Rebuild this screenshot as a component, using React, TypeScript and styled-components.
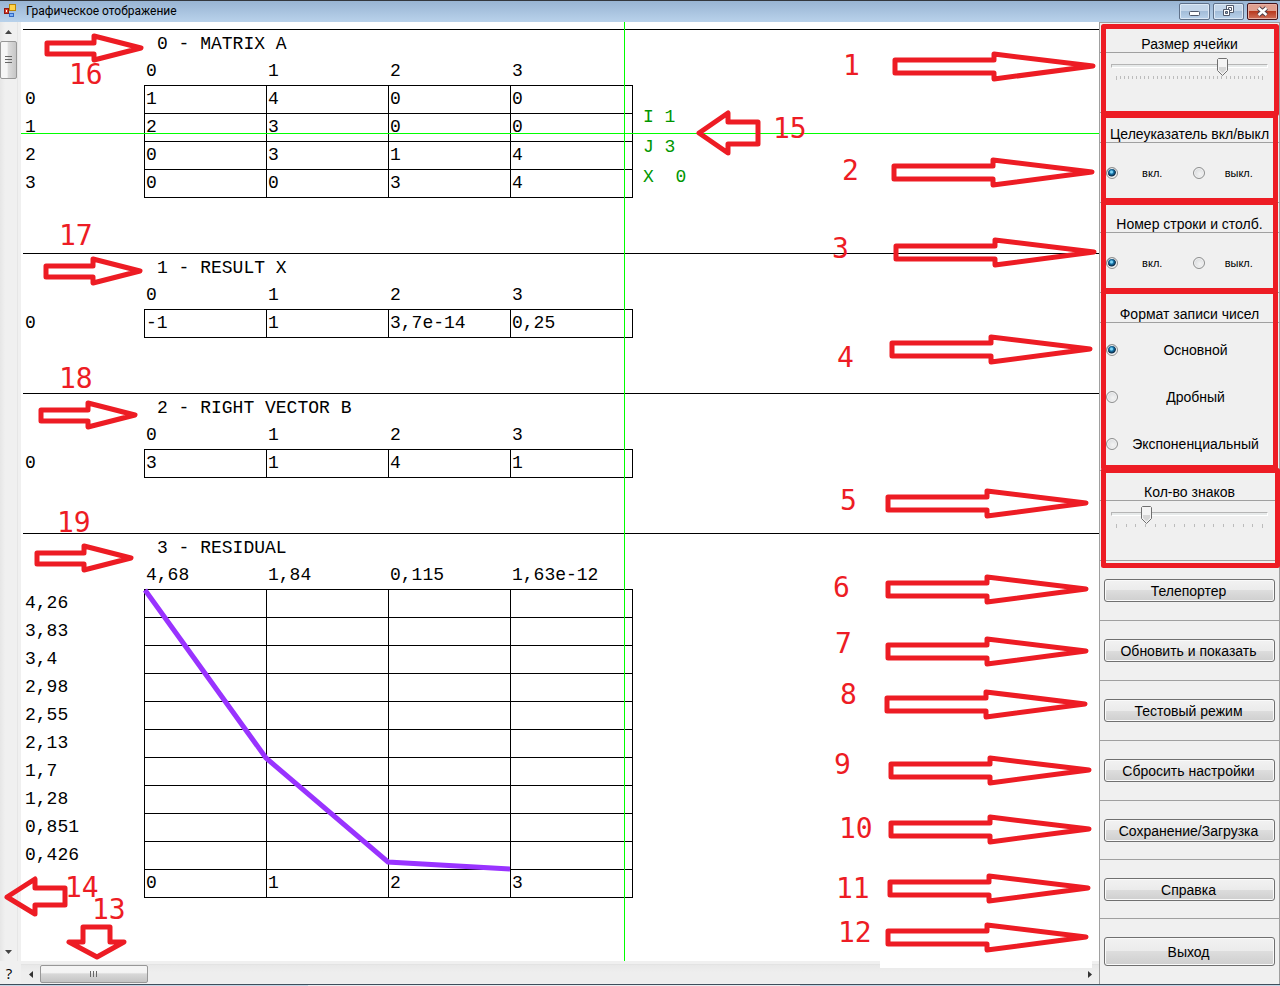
import React from "react";
import styled, { createGlobalStyle, css } from "styled-components";

const RED = "#ed1c24";
const LINE = "#a0a0a0";
const FACE = "#f0f0f0";

const GlobalStyle = createGlobalStyle`
  * { box-sizing: border-box; }
  body { margin: 0; background: ${FACE}; color: #000; font-family: "Liberation Sans", Arial, sans-serif; font-size: 14px; }
  button, input { font: inherit; margin: 0; }
`;

const Window = styled.div`
  position: relative;
  min-height: 100vh;
  display: flex;
  flex-direction: column;
  overflow: hidden;
`;

const TitleBar = styled.header`
  height: 22px;
  display: flex;
  align-items: center;
  gap: 7px;
  padding: 0 2px 1px 4px;
  border-top: 1px solid #33373d;
  background: linear-gradient(#98b4d3, #b9d2eb);
`;

const WindowTitle = styled.h1`
  flex: 1;
  margin: 0;
  font: 400 12px/16px Roboto, "Open Sans", sans-serif;
`;

const Captions = styled.div`
  display: flex;
  gap: 3px;
`;

const CaptionButton = styled.button<{ $close?: boolean }>`
  width: 31px;
  height: 17px;
  padding: 0;
  display: grid;
  place-items: center;
  border: 1px solid #5f718a;
  border-radius: 2px;
  background: linear-gradient(#c3d5e9 0 45%, #a3bdd9 50%, #b9d1ea);
  box-shadow: inset 0 0 0 1px #dce8f5;
  ${(p) =>
    p.$close &&
    css`
      border-color: #43141c;
      background: linear-gradient(#e0a090 0 45%, #b83a20 50%, #d0705a);
      box-shadow: inset 0 0 0 1px #e8b0a4;
    `}
`;

const Main = styled.div`
  flex: 1;
  display: flex;
`;

const Workspace = styled.main`
  flex: 1;
  min-width: 0;
  display: grid;
  grid-template-columns: 21px 1fr;
  grid-template-rows: 1fr 23px;
`;

const VScroll = styled.div`
  width: 18px;
  display: flex;
  flex-direction: column;
  align-items: center;
  border-right: 1px solid #e6e6e6;
  background: linear-gradient(90deg, #e6e6e6, #f0f0f0 30%);
`;

const HScroll = styled.div`
  margin-top: 3px;
  height: 19px;
  display: flex;
  align-items: center;
  border-top: 1px solid #e3e3e3;
  background: linear-gradient(#e8e8e8, #eeeeee 40%);
`;

const ScrollArrow = styled.button<{ $across?: boolean }>`
  width: ${(p) => (p.$across ? 19 : 17)}px;
  height: ${(p) => (p.$across ? 18 : 19)}px;
  padding: 0;
  border: 0;
  display: grid;
  place-items: center;
  background: none;
`;

const VThumb = styled.div`
  width: 17px;
  height: 38px;
  display: grid;
  place-items: center;
  border: 1px solid #979797;
  border-radius: 2px;
  background: linear-gradient(90deg, #f6f6f6 0 40%, #dcdcdc 50%, #c6c6c6);
`;

const HThumb = styled.div`
  width: 108px;
  height: 18px;
  display: grid;
  place-items: center;
  border: 1px solid #979797;
  border-radius: 2px;
  background: linear-gradient(#f4f4f4 0 40%, #d8d8d8 50%, #c4c4c4);
`;

const Spacer = styled.div`
  flex: 1;
`;

const HelpButton = styled.button`
  padding: 0 3px 0 0;
  border: 0;
  background: none;
  font: 400 15px/22px "Open Sans", sans-serif;
`;

const Sheet = styled.section`
  position: relative;
  background: #fff;
  padding: 7px 0 0 2px;
  font: 400 18px/28px "Liberation Mono", "Courier New", monospace;
`;

const Block = styled.article`
  position: relative;
  border-top: 1px solid #000;
  padding-bottom: 55px;
`;

const BlockTitle = styled.h2`
  margin: 0;
  padding-left: 134px;
  height: 27px;
  font: inherit;
  white-space: pre;
`;

const Grid = styled.table`
  width: 610px;
  table-layout: fixed;
  border-spacing: 0;
`;

const Label = styled.th`
  height: 28px;
  padding: 0 0 0 2px;
  text-align: left;
  vertical-align: top;
  font-weight: 400;
  white-space: nowrap;
`;

const Cell = styled.td`
  height: 28px;
  padding: 0 0 0 1px;
  vertical-align: top;
  line-height: 27px;
  border-top: 1px solid #000;
  border-left: 1px solid #000;
  white-space: nowrap;
  &:last-child { border-right: 1px solid #000; }
  tr:last-child > & { border-bottom: 1px solid #000; height: 29px; }
`;

const Curve = styled.svg`
  position: absolute;
  left: 121px;
  top: 55px;
  overflow: visible;
`;

const CrossV = styled.div`
  position: absolute;
  left: 603px;
  top: 0;
  bottom: 0;
  width: 1px;
  background: #00ff00;
`;

const CrossH = styled.div`
  position: absolute;
  left: 0;
  right: 0;
  top: 111px;
  height: 1px;
  background: #00ff00;
`;

const Readout = styled.pre`
  position: absolute;
  left: 622px;
  top: 80px;
  margin: 0;
  font: inherit;
  line-height: 30px;
  color: #009600;
`;

const Panel = styled.aside`
  width: 181px;
  display: flex;
  flex-direction: column;
  border: 1px solid ${LINE};
  border-bottom: 0;
`;

const Group = styled.fieldset<{ $h: number }>`
  height: ${(p) => p.$h}px;
  min-width: 0;
  margin: 0;
  padding: 0;
  border: 0;
  border-bottom: 1px solid ${LINE};
`;

const GroupTitle = styled.div`
  height: 30px;
  display: flex;
  justify-content: center;
  padding-top: 14px;
  border-bottom: 1px solid ${LINE};
  line-height: 15px;
  white-space: nowrap;
`;

const RadioPair = styled.div`
  height: 59px;
  padding: 0 6px;
  display: grid;
  grid-template-columns: 1fr 1fr;
  gap: 6px;
  align-items: center;
  font-size: 11px;
`;

const RadioList = styled.div`
  padding: 3px 6px;
`;

const RadioLabel = styled.label<{ $tall?: boolean }>`
  height: ${(p) => (p.$tall ? 47 : 20)}px;
  display: flex;
  align-items: center;
  span { flex: 1; text-align: center; }
`;

const Radio = styled.input`
  appearance: none;
  width: 12px;
  height: 12px;
  border: 1px solid #8e8f8f;
  border-radius: 50%;
  background: radial-gradient(circle at 60% 60%, #f4f4f4, #d0d3d6);
  box-shadow: inset 0 0 0 1px #f4f4f4;
  &:checked {
    background: radial-gradient(circle at 45% 40%, #7fd4f5 0 1px, #1779b0 2px, #0b2c48 4px, #e8ecef 5px);
  }
`;

const SliderBox = styled.div`
  padding: 3px 11px 0;
`;

const thumbArt = `url("data:image/svg+xml,%3Csvg xmlns='http://www.w3.org/2000/svg' width='11' height='19'%3E%3Cpath d='M1.5.5h8l1 1v11L5.5 17.5.5 12.500v-11z' fill='%23f4f4f4' stroke='%23707070'/%3E%3Cpath d='M2 9h7v3l-3.500 3.500L2 12z' fill='%23d6d6d6'/%3E%3C/svg%3E")`;

const Slider = styled.input`
  appearance: none;
  display: block;
  width: 100%;
  height: 20px;
  background: none;
  &::-webkit-slider-runnable-track {
    height: 4px;
    border: 1px solid #b5b5b5;
    border-right-color: #fff;
    border-bottom-color: #fff;
    background: #e7eaea;
  }
  &::-webkit-slider-thumb {
    appearance: none;
    width: 11px;
    height: 19px;
    margin-top: -7px;
    background: ${thumbArt} no-repeat;
  }
`;

const Ticks = styled.svg`
  display: block;
  width: 100%;
  height: 5px;
  overflow: visible;
`;

const Slot = styled.div<{ $h?: number }>`
  ${(p) => (p.$h ? `height: ${p.$h}px;` : "flex: 1;")}
  display: flex;
  align-items: center;
  padding: 0 4px;
  & + & { border-top: 1px solid ${LINE}; }
`;

const PushButton = styled.button<{ $tall?: boolean }>`
  width: 100%;
  height: ${(p) => (p.$tall ? 29 : 23)}px;
  padding: 1px 2px 0 0;
  border: 1px solid #707070;
  border-radius: 3px;
  background: linear-gradient(#f2f2f2 0, #ebebeb 50%, #dddddd 50%, #cfcfcf);
  box-shadow: inset 0 0 0 1px #fafafa;
  white-space: nowrap;
`;

const Taskbar = styled.footer`
  height: 2px;
  border-top: 1px solid #3f4e5c;
  background: linear-gradient(90deg, #c3d6e6 308px, #e9eef2 308px 800px, #c3d6e6 800px);
`;

const Notes = styled.svg<{ $right?: boolean }>`
  position: absolute;
  top: 0;
  ${(p) => (p.$right ? "right: 0; width: 460px;" : "left: 0; width: 820px;")}
  height: 986px;
  pointer-events: none;
  overflow: visible;
  text { fill: ${RED}; font: 400 28px "DejaVu Sans Mono", monospace; }
  path, rect { fill: none; stroke: ${RED}; stroke-width: 5; stroke-linejoin: round; }
  line { stroke: #fff; stroke-width: 8; }
`;

const Ticker = ({ count }: { count: number }) => (
  <Ticks>
    {Array.from({ length: count + 1 }, (_, i) => (
      <rect key={i} x={5 + Math.round((146 * i) / count)} y="0" width="1" height={i === 0 || i === count ? 4 : 3} fill="#bcbcbc" />
    ))}
  </Ticks>
);

type SheetTable = { title: string; head: string[]; rows: [string, string[]][]; curve?: boolean };

const blank = ["", "", "", ""];
const levels = ["4,26", "3,83", "3,4", "2,98", "2,55", "2,13", "1,7", "1,28", "0,851", "0,426"];

const tables: SheetTable[] = [
  {
    title: "0 - MATRIX A",
    head: ["0", "1", "2", "3"],
    rows: [
      ["0", ["1", "4", "0", "0"]],
      ["1", ["2", "3", "0", "0"]],
      ["2", ["0", "3", "1", "4"]],
      ["3", ["0", "0", "3", "4"]],
    ],
  },
  { title: "1 - RESULT X", head: ["0", "1", "2", "3"], rows: [["0", ["-1", "1", "3,7e-14", "0,25"]]] },
  { title: "2 - RIGHT VECTOR B", head: ["0", "1", "2", "3"], rows: [["0", ["3", "1", "4", "1"]]] },
  {
    title: "3 - RESIDUAL",
    head: ["4,68", "1,84", "0,115", "1,63e-12"],
    rows: [...levels.map((l): [string, string[]] => [l, blank]), ["", ["0", "1", "2", "3"]]],
    curve: true,
  },
];

const DataBlock = ({ data }: { data: SheetTable }) => (
  <Block>
    <BlockTitle>{data.title}</BlockTitle>
    <Grid aria-label={data.title}>
      <colgroup>
        <col width="121" /><col width="122" /><col width="122" /><col width="122" /><col width="123" />
      </colgroup>
      <thead>
        <tr>
          <Label as="td" />
          {data.head.map((h, i) => <Label key={i} scope="col">{h}</Label>)}
        </tr>
      </thead>
      <tbody>
        {data.rows.map(([label, cells], r) => (
          <tr key={r}>
            <Label scope="row">{label}</Label>
            {cells.map((c, i) => <Cell key={i}>{c}</Cell>)}
          </tr>
        ))}
      </tbody>
    </Grid>
    {data.curve && (
      <Curve width="488" height="308">
        <polyline points="1,1 122,169 244,273 366,280" fill="none" stroke="#9933ff" strokeWidth="5" />
      </Curve>
    )}
  </Block>
);

// Callouts: number, text x, text baseline, arrow left edge, arrow axis
const rightNotes: [string, number, number, number, number][] = [
  ["1", 843, 75, 894, 66],
  ["2", 842, 180, 893, 172],
  ["3", 832, 258, 895, 252],
  ["4", 837, 367, 891, 349],
  ["5", 840, 510, 887, 503],
  ["6", 833, 597, 887, 589],
  ["7", 835, 653, 887, 651],
  ["8", 840, 704, 886, 704],
  ["9", 834, 774, 890, 770],
  ["10", 839, 838, 890, 829],
  ["11", 836, 898, 889, 888],
  ["12", 838, 942, 887, 937],
];

const leftNotes: [string, number, number, number, number][] = [
  ["16", 69, 84, 47, 48],
  ["17", 59, 245, 46, 271],
  ["18", 59, 388, 41, 415],
  ["19", 57, 532, 37, 558],
];

const buttons: [string, number | undefined][] = [
  ["Телепортер", 59],
  ["Обновить и показать", 60],
  ["Тестовый режим", 60],
  ["Сбросить настройки", 60],
  ["Сохранение/Загрузка", 59],
  ["Справка", 59],
  ["Выход", undefined],
];

export default function App() {
  return (
    <Window>
      <GlobalStyle />
      <TitleBar>
        <svg width="15" height="16" viewBox="0 0 15 16">
          <rect x="0.5" y="5.500" width="4" height="5" fill="#d9412f" stroke="#8f1710" />
          <rect x="5.500" y="1.500" width="6" height="6" fill="#ffd34a" stroke="#b98505" />
          <rect x="5.500" y="10.500" width="4" height="3" fill="#7db1f5" stroke="#3168c5" />
          <rect x="2" y="7" width="1" height="2" fill="#fff" />
        </svg>
        <WindowTitle>Графическое отображение</WindowTitle>
        <Captions>
          <CaptionButton aria-label="Свернуть">
            <svg width="13" height="11"><rect x="1.500" y="5.500" width="10" height="4" rx="1" fill="#fff" stroke="#50586a" /></svg>
          </CaptionButton>
          <CaptionButton aria-label="Восстановить">
            <svg width="13" height="12" fill="#fff" stroke="#50586a">
              <path d="M4.500.5h7v7h-7z" /><path d="M6.500 2.500h3v3h-3z" />
              <path d="M1.500 4.500h6v6h-6z" /><path d="M3.500 6.500h2v2h-2z" fill="#8fa9c6" />
            </svg>
          </CaptionButton>
          <CaptionButton $close aria-label="Закрыть">
            <svg width="13" height="11">
              <path d="M2.500 2l8 7M10.500 2l-8 7" stroke="#50404a" strokeWidth="4.500" />
              <path d="M2.500 2l8 7M10.500 2l-8 7" stroke="#fff" strokeWidth="2.500" />
            </svg>
          </CaptionButton>
        </Captions>
      </TitleBar>

      <Main>
        <Workspace>
          <VScroll>
            <ScrollArrow aria-label="Вверх"><svg width="7" height="4"><path d="M0 4L3.500 0 7 4z" fill="#444" /></svg></ScrollArrow>
            <VThumb>
              <svg width="8" height="8" stroke="#666"><path d="M0 .5h7M0 3.500h7M0 6.500h7" /></svg>
            </VThumb>
            <Spacer />
            <ScrollArrow aria-label="Вниз"><svg width="7" height="4"><path d="M0 0h7L3.500 4z" fill="#444" /></svg></ScrollArrow>
          </VScroll>

          <Sheet>
            {tables.map((t) => <DataBlock key={t.title} data={t} />)}
            <CrossH />
            <CrossV />
            <Readout>{"I 1\nJ 3\nX  0"}</Readout>
          </Sheet>

          <HelpButton>?</HelpButton>
          <HScroll>
            <ScrollArrow $across aria-label="Влево"><svg width="4" height="7"><path d="M4 0v7L0 3.500z" fill="#333" /></svg></ScrollArrow>
            <HThumb>
              <svg width="8" height="7" stroke="#666"><path d="M.5 0v6M3.500 0v6M6.500 0v6" /></svg>
            </HThumb>
            <Spacer />
            <ScrollArrow $across aria-label="Вправо"><svg width="4" height="7"><path d="M0 0v7L4 3.500z" fill="#333" /></svg></ScrollArrow>
          </HScroll>
        </Workspace>

        <Panel>
          <Group $h={90} aria-label="Размер ячейки">
            <GroupTitle as="label" htmlFor="cell-size">Размер ячейки</GroupTitle>
            <SliderBox>
              <Slider id="cell-size" type="range" min={0} max={100} defaultValue={73} />
              <Ticker count={36} />
            </SliderBox>
          </Group>
          {[["aim", "Целеуказатель вкл/выкл"], ["index", "Номер строки и столб."]].map(([name, title]) => (
            <Group key={name} $h={90} aria-label={title}>
              <GroupTitle>{title}</GroupTitle>
              <RadioPair>
                <RadioLabel><Radio type="radio" name={name} defaultChecked /><span>вкл.</span></RadioLabel>
                <RadioLabel><Radio type="radio" name={name} /><span>выкл.</span></RadioLabel>
              </RadioPair>
            </Group>
          ))}
          <Group $h={178} aria-label="Формат записи чисел">
            <GroupTitle>Формат записи чисел</GroupTitle>
            <RadioList>
              {["Основной", "Дробный", "Экспоненциальный"].map((f, i) => (
                <RadioLabel key={f} $tall><Radio type="radio" name="format" defaultChecked={i === 0} /><span>{f}</span></RadioLabel>
              ))}
            </RadioList>
          </Group>
          <Group $h={90} aria-label="Кол-во знаков">
            <GroupTitle as="label" htmlFor="digits">Кол-во знаков</GroupTitle>
            <SliderBox>
              <Slider id="digits" type="range" min={0} max={15} defaultValue={3} />
              <Ticker count={15} />
            </SliderBox>
          </Group>
          {buttons.map(([text, h]) => (
            <Slot key={text} $h={h}><PushButton $tall={!h}>{text}</PushButton></Slot>
          ))}
        </Panel>
      </Main>
      <Taskbar />

      <Notes>
        {leftNotes.map(([n, tx, ty, x, y]) => (
          <g key={n}>
            <text x={tx} y={ty}>{n}</text>
            <path d={`M${x} ${y - 5}h47v-7l47 12-47 12v-6h-47z`} />
          </g>
        ))}
        <text x="773" y="138">15</text>
        <path d="M699 133l29-20v9h30v22h-30v9z" />
        <text x="65" y="897">14</text>
        <path d="M7 897l28-18v9h30v17h-30v9z" />
        <text x="92" y="919">13</text>
        <path d="M83 927h27v15h14l-27 15-28-15h14z" />
      </Notes>

      <Notes $right viewBox="820 0 460 986">
        <line x1="880" y1="964" x2="1092" y2="964" />
        {rightNotes.map(([n, tx, ty, x, y]) => (
          <g key={n}>
            <text x={tx} y={ty}>{n}</text>
            <path d={`M${x + 1} ${y - 6}h99v-6l99 12-99 13v-6h-99z`} />
          </g>
        ))}
        <rect x="1103.500" y="26.500" width="173" height="87" />
        <rect x="1103.500" y="115.500" width="172" height="85" />
        <rect x="1103.500" y="202.500" width="172" height="88" />
        <rect x="1103.500" y="291.500" width="172" height="176" />
        <rect x="1103.500" y="470.500" width="174" height="95" />
      </Notes>
    </Window>
  );
}
